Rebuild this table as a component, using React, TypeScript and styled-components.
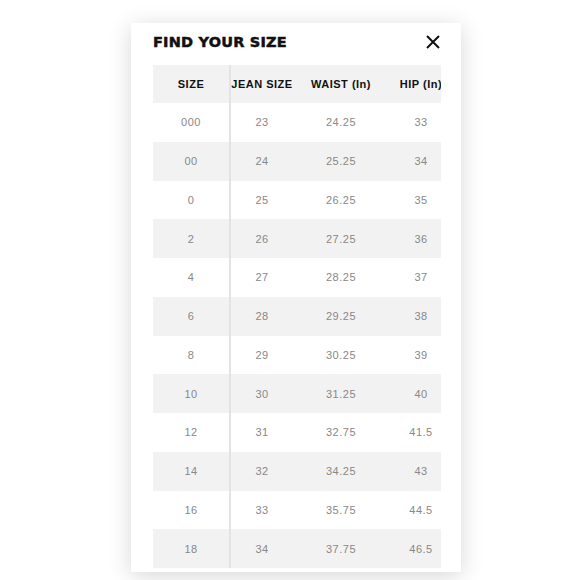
import React from 'react';
import styled, { createGlobalStyle } from 'styled-components';

const GlobalStyle = createGlobalStyle`
  body {
    margin: 0;
    background: #ffffff;
    font-family: "Liberation Sans", Arial, sans-serif;
  }
`;

const Page = styled.div`
  display: flex;
  padding: 23px 0 0 131px;
  height: 580px;
  box-sizing: border-box;
  overflow: hidden;
`;

const Card = styled.div`
  width: 330px;
  height: 549px;
  box-sizing: border-box;
  padding: 0 21px 4px 22px;
  background: #ffffff;
  box-shadow: 0 4px 22px rgba(0, 0, 0, 0.16);
  display: flex;
  flex-direction: column;
`;

const TopBar = styled.div`
  height: 37px;
  margin-bottom: 5px;
  display: flex;
  align-items: center;
  justify-content: space-between;
`;

const Title = styled.h2`
  margin: 0;
  font-family: "DejaVu Sans", sans-serif;
  font-weight: 700;
  font-size: 14.5px;
  letter-spacing: 0.2px;
  color: #111;
  -webkit-text-stroke: 0.5px #111;
`;

const Close = styled.button`
  border: none;
  background: none;
  padding: 0;
  width: 14px;
  height: 14px;
  display: flex;
  cursor: pointer;
`;

const Table = styled.div`
  width: 288px;
  overflow: hidden;
`;

const Row = styled.div<{ $shade: boolean; $head?: boolean }>`
  display: grid;
  grid-template-columns: 78px 62px 96px 64px;
  height: ${(p) => (p.$head ? '38px' : '38.75px')};
  background: ${(p) => (p.$shade ? '#f2f2f2' : '#ffffff')};
  width: 300px;
`;

const Cell = styled.div<{ $head?: boolean; $first?: boolean }>`
  display: flex;
  align-items: center;
  justify-content: center;
  font-size: 11px;
  white-space: nowrap;
  font-weight: ${(p) => (p.$head ? 700 : 400)};
  color: ${(p) => (p.$head ? '#111' : '#888888')};
  letter-spacing: 0.5px;
  border-right: ${(p) => (p.$first ? '2px solid #e3e3e3' : 'none')};
  box-sizing: border-box;
`;

const headers = ['SIZE', 'JEAN SIZE', 'WAIST (In)', 'HIP (In)'];

const rows = [
  ['000', '23', '24.25', '33'],
  ['00', '24', '25.25', '34'],
  ['0', '25', '26.25', '35'],
  ['2', '26', '27.25', '36'],
  ['4', '27', '28.25', '37'],
  ['6', '28', '29.25', '38'],
  ['8', '29', '30.25', '39'],
  ['10', '30', '31.25', '40'],
  ['12', '31', '32.75', '41.5'],
  ['14', '32', '34.25', '43'],
  ['16', '33', '35.75', '44.5'],
  ['18', '34', '37.75', '46.5'],
];

const App = () => (
  <>
    <GlobalStyle />
    <Page>
      <Card>
        <TopBar>
          <Title>FIND YOUR SIZE</Title>
          <Close aria-label="Close">
            <svg width="14" height="14" viewBox="0 0 14 14">
              <path d="M1 1 L13 13 M13 1 L1 13" stroke="#111" strokeWidth="2" />
            </svg>
          </Close>
        </TopBar>
        <Table>
          <Row $shade $head>
            {headers.map((h, i) => (
              <Cell key={h} $head $first={i === 0}>
                {h}
              </Cell>
            ))}
          </Row>
          {rows.map((r, idx) => (
            <Row key={r[0]} $shade={idx % 2 === 1}>
              {r.map((v, i) => (
                <Cell key={i} $first={i === 0}>
                  {v}
                </Cell>
              ))}
            </Row>
          ))}
        </Table>
      </Card>
    </Page>
  </>
);

export default App;
